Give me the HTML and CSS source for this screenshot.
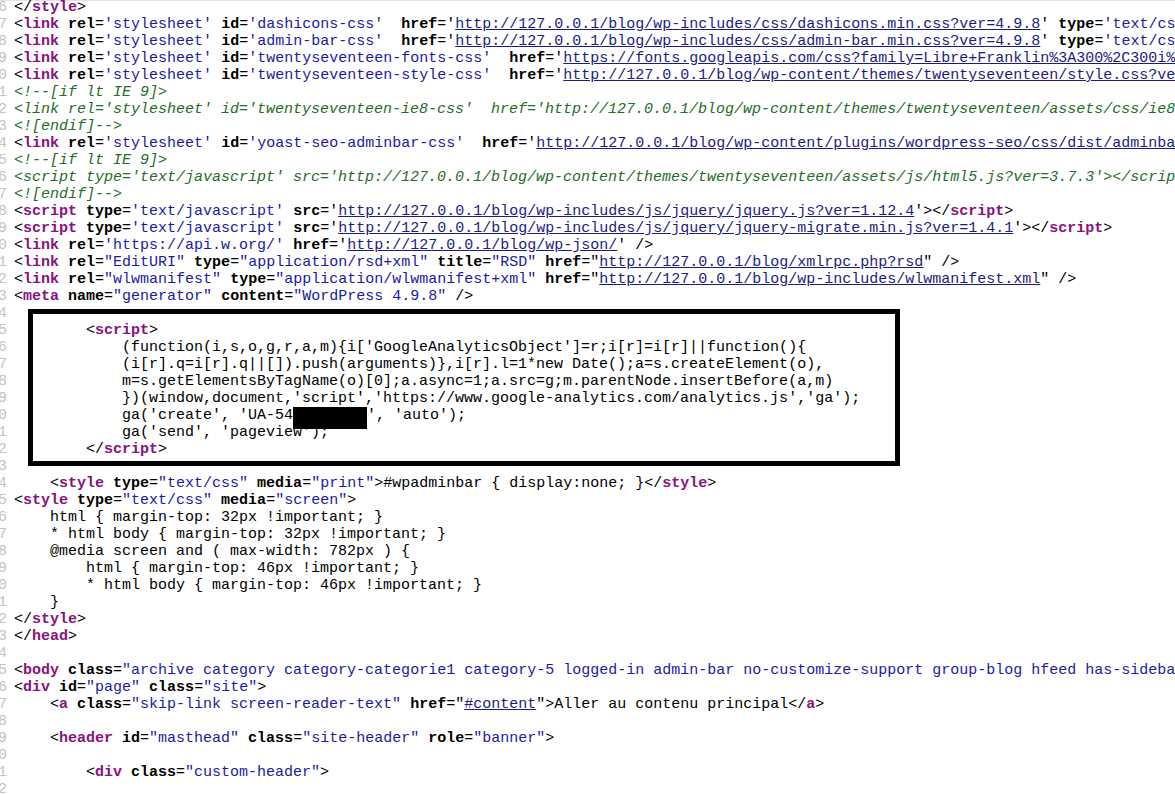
FILE: index.html
```
<!doctype html>
<html lang="en">
    <head>
        <meta charset="UTF-8" />
        <title>view-source</title>
        <link rel="stylesheet" href="styles.css">
    </head>
    <body>
        <div class="source">
            <div class="gutter">26
27
28
29
30
31
32
33
34
35
36
37
38
39
40
41
42
43
44
45
46
47
48
49
50
51
52
53
54
55
56
57
58
59
60
61
62
63
64
65
66
67
68
69
70
71
72</div>
<pre class="code">&lt;/<span class="t">style</span>&gt;
&lt;<span class="t">link</span> <span class="n">rel</span>=<span class="v">'stylesheet'</span> <span class="n">id</span>=<span class="v">'dashicons-css'</span>  <span class="n">href</span>='<span class="u">http://127.0.0.1/blog/wp-includes/css/dashicons.min.css?ver=4.9.8</span>' <span class="n">type</span>=<span class="v">'text/css'</span> <span class="n">media</span>=<span class="v">'all'</span> /&gt;
&lt;<span class="t">link</span> <span class="n">rel</span>=<span class="v">'stylesheet'</span> <span class="n">id</span>=<span class="v">'admin-bar-css'</span>  <span class="n">href</span>='<span class="u">http://127.0.0.1/blog/wp-includes/css/admin-bar.min.css?ver=4.9.8</span>' <span class="n">type</span>=<span class="v">'text/css'</span> <span class="n">media</span>=<span class="v">'all'</span> /&gt;
&lt;<span class="t">link</span> <span class="n">rel</span>=<span class="v">'stylesheet'</span> <span class="n">id</span>=<span class="v">'twentyseventeen-fonts-css'</span>  <span class="n">href</span>='<span class="u">https://fonts.googleapis.com/css?family=Libre+Franklin%3A300%2C300i%2C400%2C400i%2C600</span>' /&gt;
&lt;<span class="t">link</span> <span class="n">rel</span>=<span class="v">'stylesheet'</span> <span class="n">id</span>=<span class="v">'twentyseventeen-style-css'</span>  <span class="n">href</span>='<span class="u">http://127.0.0.1/blog/wp-content/themes/twentyseventeen/style.css?ver=4.9.8</span>' /&gt;
<span class="c">&lt;!--[if lt IE 9]&gt;</span>
<span class="c">&lt;link rel='stylesheet' id='twentyseventeen-ie8-css'  href='http://127.0.0.1/blog/wp-content/themes/twentyseventeen/assets/css/ie8.css?ver=1.0' /&gt;</span>
<span class="c">&lt;![endif]--&gt;</span>
&lt;<span class="t">link</span> <span class="n">rel</span>=<span class="v">'stylesheet'</span> <span class="n">id</span>=<span class="v">'yoast-seo-adminbar-css'</span>  <span class="n">href</span>='<span class="u">http://127.0.0.1/blog/wp-content/plugins/wordpress-seo/css/dist/adminbar-780.min.css</span>' /&gt;
<span class="c">&lt;!--[if lt IE 9]&gt;</span>
<span class="c">&lt;script type='text/javascript' src='http://127.0.0.1/blog/wp-content/themes/twentyseventeen/assets/js/html5.js?ver=3.7.3'&gt;&lt;/script&gt;</span>
<span class="c">&lt;![endif]--&gt;</span>
&lt;<span class="t">script</span> <span class="n">type</span>=<span class="v">'text/javascript'</span> <span class="n">src</span>='<span class="u">http://127.0.0.1/blog/wp-includes/js/jquery/jquery.js?ver=1.12.4</span>'&gt;&lt;/<span class="t">script</span>&gt;
&lt;<span class="t">script</span> <span class="n">type</span>=<span class="v">'text/javascript'</span> <span class="n">src</span>='<span class="u">http://127.0.0.1/blog/wp-includes/js/jquery/jquery-migrate.min.js?ver=1.4.1</span>'&gt;&lt;/<span class="t">script</span>&gt;
&lt;<span class="t">link</span> <span class="n">rel</span>=<span class="v">'https://api.w.org/'</span> <span class="n">href</span>='<span class="u">http://127.0.0.1/blog/wp-json/</span>' /&gt;
&lt;<span class="t">link</span> <span class="n">rel</span>=<span class="v">"EditURI"</span> <span class="n">type</span>=<span class="v">"application/rsd+xml"</span> <span class="n">title</span>=<span class="v">"RSD"</span> <span class="n">href</span>="<span class="u">http://127.0.0.1/blog/xmlrpc.php?rsd</span>" /&gt;
&lt;<span class="t">link</span> <span class="n">rel</span>=<span class="v">"wlwmanifest"</span> <span class="n">type</span>=<span class="v">"application/wlwmanifest+xml"</span> <span class="n">href</span>="<span class="u">http://127.0.0.1/blog/wp-includes/wlwmanifest.xml</span>" /&gt;
&lt;<span class="t">meta</span> <span class="n">name</span>=<span class="v">"generator"</span> <span class="n">content</span>=<span class="v">"WordPress 4.9.8"</span> /&gt;

        &lt;<span class="t">script</span>&gt;
            (function(i,s,o,g,r,a,m){i['GoogleAnalyticsObject']=r;i[r]=i[r]||function(){
            (i[r].q=i[r].q||[]).push(arguments)},i[r].l=1*new Date();a=s.createElement(o),
            m=s.getElementsByTagName(o)[0];a.async=1;a.src=g;m.parentNode.insertBefore(a,m)
            })(window,document,'script','https://www.google-analytics.com/analytics.js','ga');
            ga('create', 'UA-54<span class="redact">000000-1</span>', 'auto');
            ga('send', 'pageview');
        &lt;/<span class="t">script</span>&gt;

    &lt;<span class="t">style</span> <span class="n">type</span>=<span class="v">"text/css"</span> <span class="n">media</span>=<span class="v">"print"</span>&gt;#wpadminbar { display:none; }&lt;/<span class="t">style</span>&gt;
&lt;<span class="t">style</span> <span class="n">type</span>=<span class="v">"text/css"</span> <span class="n">media</span>=<span class="v">"screen"</span>&gt;
    html { margin-top: 32px !important; }
    * html body { margin-top: 32px !important; }
    @media screen and ( max-width: 782px ) {
        html { margin-top: 46px !important; }
        * html body { margin-top: 46px !important; }
    }
&lt;/<span class="t">style</span>&gt;
&lt;/<span class="t">head</span>&gt;

&lt;<span class="t">body</span> <span class="n">class</span>=<span class="v">"archive category category-categorie1 category-5 logged-in admin-bar no-customize-support group-blog hfeed has-sidebar"</span>&gt;
&lt;<span class="t">div</span> <span class="n">id</span>=<span class="v">"page"</span> <span class="n">class</span>=<span class="v">"site"</span>&gt;
    &lt;<span class="t">a</span> <span class="n">class</span>=<span class="v">"skip-link screen-reader-text"</span> <span class="n">href</span>="<span class="u">#content</span>"&gt;Aller au contenu principal&lt;/<span class="t">a</span>&gt;

    &lt;<span class="t">header</span> <span class="n">id</span>=<span class="v">"masthead"</span> <span class="n">class</span>=<span class="v">"site-header"</span> <span class="n">role</span>=<span class="v">"banner"</span>&gt;

        &lt;<span class="t">div</span> <span class="n">class</span>=<span class="v">"custom-header"</span>&gt;
</pre>
            <div class="highlight"></div>
        </div>
    </body>
</html>
```
FILE: styles.css
```
body {
    margin: 0;
    background-color: #ffffff;
    color: #000000;
    font-family: "Liberation Mono", "Courier New", monospace;
    font-size: 15px;
    overflow: hidden;
}
.source {
    position: relative;
    display: flex;
    border-top: 1px solid #e2e2e2;
}
.gutter {
    flex: none;
    width: 7px;
    margin-top: -2px;
    overflow: hidden;
    direction: rtl;
    white-space: pre;
    line-height: 17px;
    color: #c4c4c4;
}
.code {
    margin: -2px 0 0 7px;
    font: inherit;
    line-height: 17px;
    white-space: pre;
}
.t {
    color: #881280;
    font-weight: bold;
}
.n {
    font-weight: bold;
}
.v {
    color: #1a1aa6;
}
.u {
    color: #1c1c84;
    text-decoration: underline;
}
.c {
    color: #236e25;
    font-style: italic;
}
.redact {
    background-color: #000000;
    color: #000000;
    padding: 0 2px 5px 0;
}
/* annotation frame drawn over the snippet */
.highlight {
    position: absolute;
    left: 28px;
    top: 308px;
    width: 872px;
    height: 157px;
    box-sizing: border-box;
    border: 5px solid #000000;
}
```
